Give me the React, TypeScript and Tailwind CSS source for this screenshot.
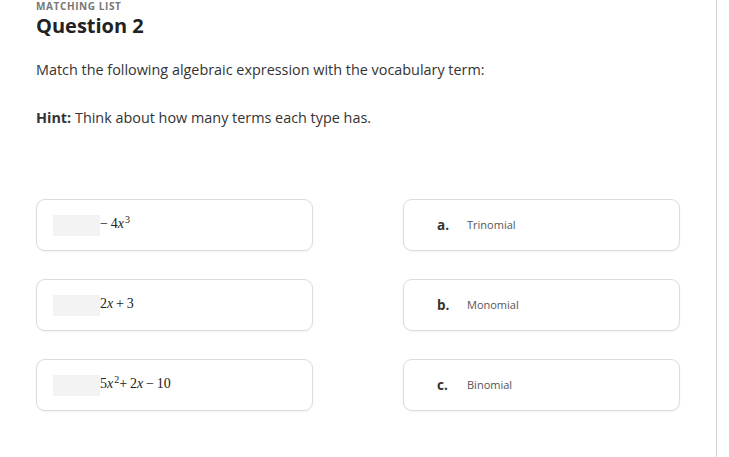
const sup = "relative -top-[5px] ml-[1px] text-[10px] leading-none";

const left = [
  { key: "1", expr: <>−&thinsp;4<i>x</i><sup className={sup}>3</sup></> },
  { key: "2", expr: <>2<i>x</i>&thinsp;+&thinsp;3</> },
  { key: "3", expr: <>5<i>x</i><sup className={sup}>2</sup>+&thinsp;2<i>x</i>&thinsp;−&thinsp;10</> },
];

const right = [
  { letter: "a.", term: "Trinomial" },
  { letter: "b.", term: "Monomial" },
  { letter: "c.", term: "Binomial" },
];

export default function App() {
  return (
    <div className="flex h-[457px] w-[729px] overflow-hidden bg-white font-['Open_Sans',sans-serif]">
      <div className="h-full w-[717px] shrink-0 border-r border-[#d4d4d4] pl-[36px]">
        <div className="text-[10px] font-bold leading-[12px] tracking-[0.06em] text-[#777]">MATCHING LIST</div>
        <h1 className="mt-[1px] text-[20px] font-bold leading-[26px] text-[#222]">Question 2</h1>

        <p className="mt-[21px] text-[14.4px] leading-[20px] text-[#333]">
          Match the following algebraic expression with the vocabulary term:
        </p>
        <p className="mt-[28px] text-[14.4px] leading-[20px] text-[#333]">
          <span className="font-bold">Hint:</span> Think about how many terms each type has.
        </p>

        <div className="mt-[71px] flex gap-[90px]">
          <div className="flex w-[277px] flex-col gap-[28px]">
            {left.map((item) => (
              <div
                key={item.key}
                className="flex h-[52px] items-center rounded-[9px] border border-[#dcdcdc] bg-white pl-[16px] shadow-[0_1px_2px_rgba(0,0,0,0.05)]"
              >
                <div className="h-[21px] w-[47px] bg-[#f3f3f3]" />
                <div className="-mt-[2px] font-['Liberation_Serif',serif] text-[14px] leading-[20px] text-[#222]">{item.expr}</div>
              </div>
            ))}
          </div>
          <div className="flex w-[277px] flex-col gap-[28px]">
            {right.map((item) => (
              <div
                key={item.letter}
                className="flex h-[52px] items-center rounded-[9px] border border-[#dcdcdc] bg-white pl-[33px] shadow-[0_1px_2px_rgba(0,0,0,0.05)]"
              >
                <span className="w-[30px] text-[13.5px] font-bold text-[#333]">{item.letter}</span>
                <span className="text-[11px] text-[#555]">{item.term}</span>
              </div>
            ))}
          </div>
        </div>
      </div>
    </div>
  );
}
